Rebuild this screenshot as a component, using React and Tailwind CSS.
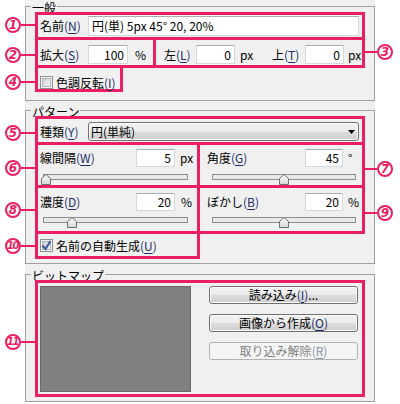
import React from 'react';

const Mn = ({ k }) => (
  <span className="text-[#1d2d6b]">
    (<span className="underline underline-offset-[2px]">{k}</span>)
  </span>
);

const Marker = ({ n, side = 'left', pos }) => {
  const circle = (
    <div
      className={`w-[16px] h-[16px] shrink-0 rounded-full border-2 border-[#e91e63] bg-white flex items-center justify-center font-['DejaVu_Sans',sans-serif] font-bold italic text-[#e91e63] leading-none ${
        n.length > 1 ? 'text-[10px] tracking-[-1.5px] pr-[1px]' : 'text-[12px]'
      }`}
    >
      {n}
    </div>
  );
  const line =
    side === 'left' ? (
      <div className="w-[17px] h-[2px] bg-[#e91e63]" />
    ) : (
      <div className="w-[15px] h-[2px] bg-[#e91e63]" />
    );
  return (
    <div className={`absolute z-10 flex items-center ${side === 'left' ? 'right-full' : 'left-full'} ${pos}`}>
      {side === 'left' ? (
        <>
          {circle}
          {line}
        </>
      ) : (
        <>
          {line}
          {circle}
        </>
      )}
    </div>
  );
};

const Box = ({ className = '', children, marker }) => (
  <div className={`relative border-[3px] border-[#e91e63] ${className}`}>
    {children}
    {marker}
  </div>
);

const Group = ({ title, className = '', children }) => (
  <fieldset className={`border border-[#a0a0a0] ${className}`}>
    <legend className="ml-[5px] px-[1px] text-[12px] leading-[12px]">
      <span className="block translate-y-[2px]">{title}</span>
    </legend>
    {children}
  </fieldset>
);

const TextBox = ({ children, className = '', left }) => (
  <div
    className={`bg-white border border-[#d5d9dd] border-t-[#abadb3] flex items-center shrink-0 ${
      left ? 'pl-[3px]' : 'justify-end pr-[3px]'
    } ${className}`}
  >
    {children}
  </div>
);

const Check = ({ checked }) => (
  <div className="relative w-[13px] h-[13px] shrink-0 border border-[#8e8f8f] bg-[#f4f4f4] p-[1px]">
    <div className="w-full h-full border border-[#aeb3b9] bg-[linear-gradient(135deg,#cbcfd5,#f6f6f6)]" />
    {checked && (
      <svg className="absolute -left-[1px] -top-[1px]" width="13" height="13" viewBox="0 0 13 13">
        <path d="M2.5 6.5 L5.5 10 L10.5 2" fill="none" stroke="#3f5a9c" strokeWidth="2.2" />
      </svg>
    )}
  </div>
);

const Slider = ({ p, className = '' }) => (
  <div className={`relative h-[6px] border border-[#8f8f8f] bg-[#e7eaea] ${className}`}>
    <svg
      className="absolute -top-[1px]"
      style={{ left: `calc(${p} * (100% - 3px) - 3.5px)` }}
      width="10"
      height="11"
      viewBox="0 0 10 11"
    >
      <defs>
        <linearGradient id="thumb" x1="0" y1="0" x2="0" y2="1">
          <stop offset="0" stopColor="#fdfdfd" />
          <stop offset="1" stopColor="#d6d6d6" />
        </linearGradient>
      </defs>
      <polygon points="5,0.5 9.5,4.5 9.5,10.5 0.5,10.5 0.5,4.5" fill="url(#thumb)" stroke="#6f6f6f" />
    </svg>
  </div>
);

const Button = ({ children, disabled }) => (
  <div
    className={`h-[18px] w-[149px] rounded-[3px] border flex items-center justify-center text-[12px] ${
      disabled
        ? 'border-[#adb2b5] bg-[#f4f4f4] text-[#838383]'
        : 'border-[#707070] bg-[linear-gradient(#f2f2f2,#ebebeb_50%,#dddddd_50%,#cfcfcf)] shadow-[inset_0_0_0_1px_#fcfcfc]'
    }`}
  >
    {children}
  </div>
);

export default function App() {
  return (
    <div className="w-[400px] h-[404px] bg-white font-['Noto_Sans_CJK_JP','Noto_Sans',sans-serif] text-[12px] leading-[16px] text-black">
      <div className="ml-[25px] w-[350px] h-[402px] bg-[#f0f0f0] flex flex-col">
        <Group title="一般">
          <div className="px-[9px] pb-[8px]">
            <Box className="h-[28px] flex items-center pl-[2px] pr-[3px]" marker={<Marker n="1" pos="top-[2px]" />}>
              <span className="w-[48px] shrink-0">
                名前<Mn k="N" />
              </span>
              <TextBox className="flex-1 h-[20px]" left>
                円(単) 5px 45° 20, 20%
              </TextBox>
            </Box>
            <div className="flex -mt-[3px]">
              <Box className="w-[121px] h-[31px] pt-[5px] pl-[2px]" marker={<Marker n="2" pos="top-[7px]" />}>
                <div className="flex items-center h-[19px]">
                  <span className="w-[48px] shrink-0">
                    拡大<Mn k="S" />
                  </span>
                  <TextBox className="w-[40px] h-[19px]">100</TextBox>
                  <span className="ml-[7px]">%</span>
                </div>
              </Box>
              <Box
                className="flex-1 -ml-[3px] h-[31px] pt-[5px] pl-[8px]"
                marker={<Marker n="3" side="right" pos="top-[4px]" />}
              >
                <div className="flex items-center h-[19px]">
                  <span className="w-[32px] shrink-0">
                    左<Mn k="L" />
                  </span>
                  <TextBox className="w-[39px] h-[19px]">0</TextBox>
                  <span className="ml-[5px] w-[32px] shrink-0">px</span>
                  <span className="w-[33px] shrink-0">
                    上<Mn k="T" />
                  </span>
                  <TextBox className="w-[39px] h-[19px]">0</TextBox>
                  <span className="ml-[4px]">px</span>
                </div>
              </Box>
            </div>
            <Box className="w-[88px] h-[27px] -mt-[3px] pt-[8px] pl-[2px]" marker={<Marker n="4" pos="top-[6px]" />}>
              <div className="flex items-center h-[13px]">
                <Check />
                <span className="ml-[3px]">
                  色調反転<Mn k="I" />
                </span>
              </div>
            </Box>
          </div>
        </Group>

        <Group title="パターン" className="mt-[3px]">
          <div className="px-[9px] pb-[4px]">
            <Box className="h-[29px] pt-[3px] pl-[2px] pr-[3px]" marker={<Marker n="5" pos="top-[6px]" />}>
              <div className="flex items-center h-[19px]">
                <span className="w-[48px] shrink-0">
                  種類<Mn k="Y" />
                </span>
                <div className="flex-1 h-[19px] rounded-[3px] border border-[#707070] bg-[linear-gradient(#f2f2f2,#ebebeb_50%,#dddddd_50%,#cfcfcf)] shadow-[inset_0_0_0_1px_#fcfcfc] flex items-center pl-[2px] pr-[3px]">
                  <span className="flex-1">円(単純)</span>
                  <svg width="7" height="4" viewBox="0 0 7 4">
                    <path d="M0 0H7L3.5 4Z" fill="#000" />
                  </svg>
                </div>
              </div>
            </Box>

            <div className="flex -mt-[3px]">
              <Box className="w-[165px] h-[46px] pt-[4px] pl-[2px]" marker={<Marker n="6" pos="top-[15px]" />}>
                <div className="flex items-center h-[18px]">
                  <span className="w-[96px] shrink-0">
                    線間隔<Mn k="W" />
                  </span>
                  <TextBox className="w-[39px] h-[18px]">5</TextBox>
                  <span className="ml-[5px]">px</span>
                </div>
                <Slider p={0} className="mt-[7px] ml-[3px] w-[145px]" />
              </Box>
              <Box
                className="flex-1 -ml-[3px] h-[46px] pt-[4px] pl-[7px]"
                marker={<Marker n="7" side="right" pos="top-[16px]" />}
              >
                <div className="flex items-center h-[18px]">
                  <span className="w-[98px] shrink-0">
                    角度<Mn k="G" />
                  </span>
                  <TextBox className="w-[38px] h-[18px]">45</TextBox>
                  <span className="ml-[5px]">°</span>
                </div>
                <Slider p={0.5} className="mt-[7px] ml-[5px] w-[144px]" />
              </Box>
            </div>

            <div className="flex -mt-[3px]">
              <Box className="w-[165px] h-[49px] pt-[5px] pl-[2px]" marker={<Marker n="8" pos="top-[14px]" />}>
                <div className="flex items-center h-[18px]">
                  <span className="w-[96px] shrink-0">
                    濃度<Mn k="D" />
                  </span>
                  <TextBox className="w-[39px] h-[18px]">20</TextBox>
                  <span className="ml-[6px]">%</span>
                </div>
                <Slider p={0.19} className="mt-[6px] ml-[3px] w-[145px]" />
              </Box>
              <Box
                className="flex-1 -ml-[3px] h-[49px] pt-[5px] pl-[7px]"
                marker={<Marker n="9" side="right" pos="top-[17px]" />}
              >
                <div className="flex items-center h-[18px]">
                  <span className="w-[98px] shrink-0">
                    ぼかし<Mn k="B" />
                  </span>
                  <TextBox className="w-[38px] h-[18px]">20</TextBox>
                  <span className="ml-[5px]">%</span>
                </div>
                <Slider p={0.5} className="mt-[6px] ml-[5px] w-[144px]" />
              </Box>
            </div>

            <Box className="w-[165px] h-[28px] -mt-[3px] pt-[5px] pl-[2px]" marker={<Marker n="10" pos="top-[4px]" />}>
              <div className="flex items-center h-[13px]">
                <Check checked />
                <span className="ml-[3px]">
                  名前の自動生成<Mn k="U" />
                </span>
              </div>
            </Box>
          </div>
        </Group>

        <Group title="ビットマップ" className="mt-[4px]">
          <div className="px-[9px] pb-[4px]">
            <Box className="h-[117px] pt-[3px] pl-[2px] flex items-start" marker={<Marker n="11" pos="top-[51px]" />}>
              <div className="w-[151px] h-[106px] bg-[#808080] border border-[#6a6a6a] shrink-0" />
              <div className="ml-[18px] flex flex-col gap-[10px]">
                <Button>
                  読み込み<Mn k="I" />...
                </Button>
                <Button>
                  画像から作成<Mn k="O" />
                </Button>
                <Button disabled>
                  取り込み解除<span className="text-[#8a93ad]">(<span className="underline underline-offset-[2px]">R</span>)</span>
                </Button>
              </div>
            </Box>
          </div>
        </Group>
      </div>
    </div>
  );
}
